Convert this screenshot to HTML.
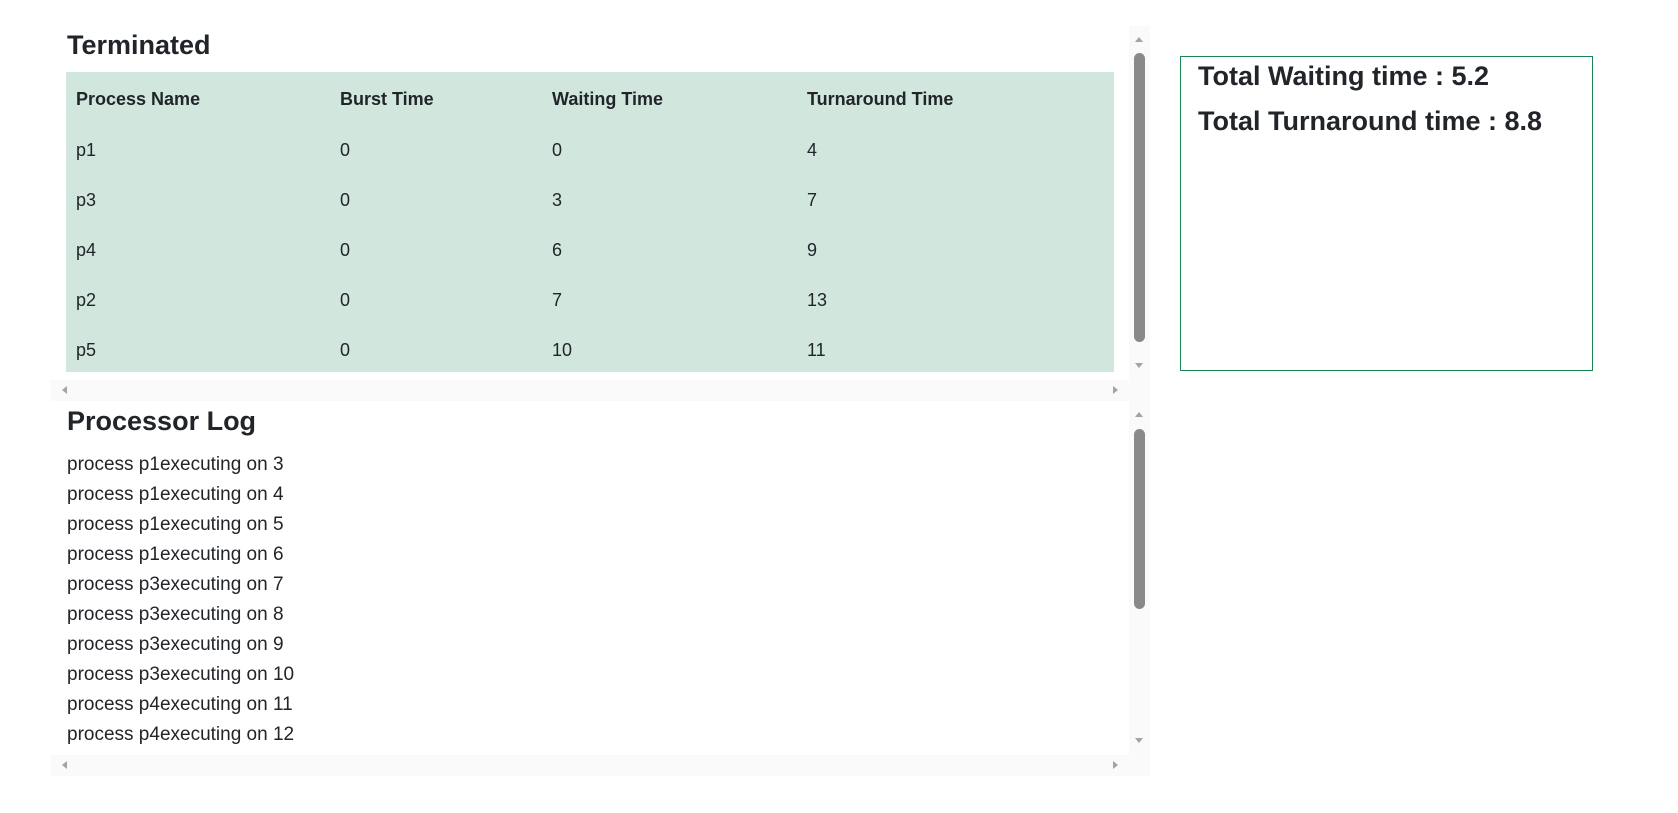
<!DOCTYPE html>
<html><head><meta charset="utf-8"><style>
*{margin:0;padding:0;box-sizing:border-box}
body{width:1678px;height:813px;background:#fff;position:relative;overflow:hidden;font-family:"Liberation Sans",sans-serif;color:#212529}
.a{position:absolute}
.sb{background:#fafafa}
.thumb{position:absolute;background:#898989;border-radius:6px;width:11px;left:5px}
.tri{position:absolute;width:0;height:0}
h2{position:absolute;font-weight:bold;font-size:27px;left:67px;line-height:1}
.cell{position:absolute;font-size:18px;line-height:1}
.log{position:absolute;left:67px;font-size:19px;line-height:1}
</style></head><body>
<div class="a" style="left:51px;top:26px;width:1099px;height:375px;background:#fff"></div>
<h2 style="top:32px">Terminated</h2>
<div class="a" style="left:66px;top:72px;width:1048px;height:300px;background:#d1e7dd"></div>
<div class="cell" style="left:76px;top:90px;font-weight:bold">Process Name</div>
<div class="cell" style="left:340px;top:90px;font-weight:bold">Burst Time</div>
<div class="cell" style="left:552px;top:90px;font-weight:bold">Waiting Time</div>
<div class="cell" style="left:807px;top:90px;font-weight:bold">Turnaround Time</div>

<div class="cell" style="left:76px;top:141px">p1</div><div class="cell" style="left:340px;top:141px">0</div><div class="cell" style="left:552px;top:141px">0</div><div class="cell" style="left:807px;top:141px">4</div>
<div class="cell" style="left:76px;top:191px">p3</div><div class="cell" style="left:340px;top:191px">0</div><div class="cell" style="left:552px;top:191px">3</div><div class="cell" style="left:807px;top:191px">7</div>
<div class="cell" style="left:76px;top:241px">p4</div><div class="cell" style="left:340px;top:241px">0</div><div class="cell" style="left:552px;top:241px">6</div><div class="cell" style="left:807px;top:241px">9</div>
<div class="cell" style="left:76px;top:291px">p2</div><div class="cell" style="left:340px;top:291px">0</div><div class="cell" style="left:552px;top:291px">7</div><div class="cell" style="left:807px;top:291px">13</div>
<div class="cell" style="left:76px;top:341px">p5</div><div class="cell" style="left:340px;top:341px">0</div><div class="cell" style="left:552px;top:341px">10</div><div class="cell" style="left:807px;top:341px">11</div>

<div class="a sb" style="left:1129px;top:26px;width:21px;height:354px">
 <div class="tri" style="left:6px;top:11px;border-left:4.5px solid transparent;border-right:4.5px solid transparent;border-bottom:5px solid #a3a3a3"></div>
 <div class="thumb" style="top:27px;height:289px"></div>
 <div class="tri" style="left:6px;top:337px;border-left:4.5px solid transparent;border-right:4.5px solid transparent;border-top:5px solid #a3a3a3"></div>
</div>
<div class="a sb" style="left:51px;top:380px;width:1099px;height:21px">
 <div class="tri" style="left:11px;top:6px;border-top:4.5px solid transparent;border-bottom:4.5px solid transparent;border-right:5px solid #a3a3a3"></div>
 <div class="tri" style="left:1062px;top:6px;border-top:4.5px solid transparent;border-bottom:4.5px solid transparent;border-left:5px solid #a3a3a3"></div>
</div>

<h2 style="top:408px">Processor Log</h2>
<div class="log" style="top:455px">process p1executing on 3</div>
<div class="log" style="top:485px">process p1executing on 4</div>
<div class="log" style="top:515px">process p1executing on 5</div>
<div class="log" style="top:545px">process p1executing on 6</div>
<div class="log" style="top:575px">process p3executing on 7</div>
<div class="log" style="top:605px">process p3executing on 8</div>
<div class="log" style="top:635px">process p3executing on 9</div>
<div class="log" style="top:665px">process p3executing on 10</div>
<div class="log" style="top:695px">process p4executing on 11</div>
<div class="log" style="top:725px">process p4executing on 12</div>
<div class="a sb" style="left:1129px;top:401px;width:21px;height:354px">
 <div class="tri" style="left:6px;top:11px;border-left:4.5px solid transparent;border-right:4.5px solid transparent;border-bottom:5px solid #a3a3a3"></div>
 <div class="thumb" style="top:28px;height:180px"></div>
 <div class="tri" style="left:6px;top:337px;border-left:4.5px solid transparent;border-right:4.5px solid transparent;border-top:5px solid #a3a3a3"></div>
</div>
<div class="a sb" style="left:51px;top:755px;width:1099px;height:21px">
 <div class="tri" style="left:11px;top:6px;border-top:4.5px solid transparent;border-bottom:4.5px solid transparent;border-right:5px solid #a3a3a3"></div>
 <div class="tri" style="left:1062px;top:6px;border-top:4.5px solid transparent;border-bottom:4.5px solid transparent;border-left:5px solid #a3a3a3"></div>
</div>

<div class="a" style="left:1180px;top:56px;width:413px;height:315px;border:1px solid #198754"></div>
<div class="a" style="left:1198px;top:63px;font-size:27px;font-weight:bold;line-height:1;white-space:nowrap">Total Waiting time : 5.2</div>
<div class="a" style="left:1198px;top:108px;font-size:27px;font-weight:bold;line-height:1;white-space:nowrap">Total Turnaround time : 8.8</div>
</body></html>
